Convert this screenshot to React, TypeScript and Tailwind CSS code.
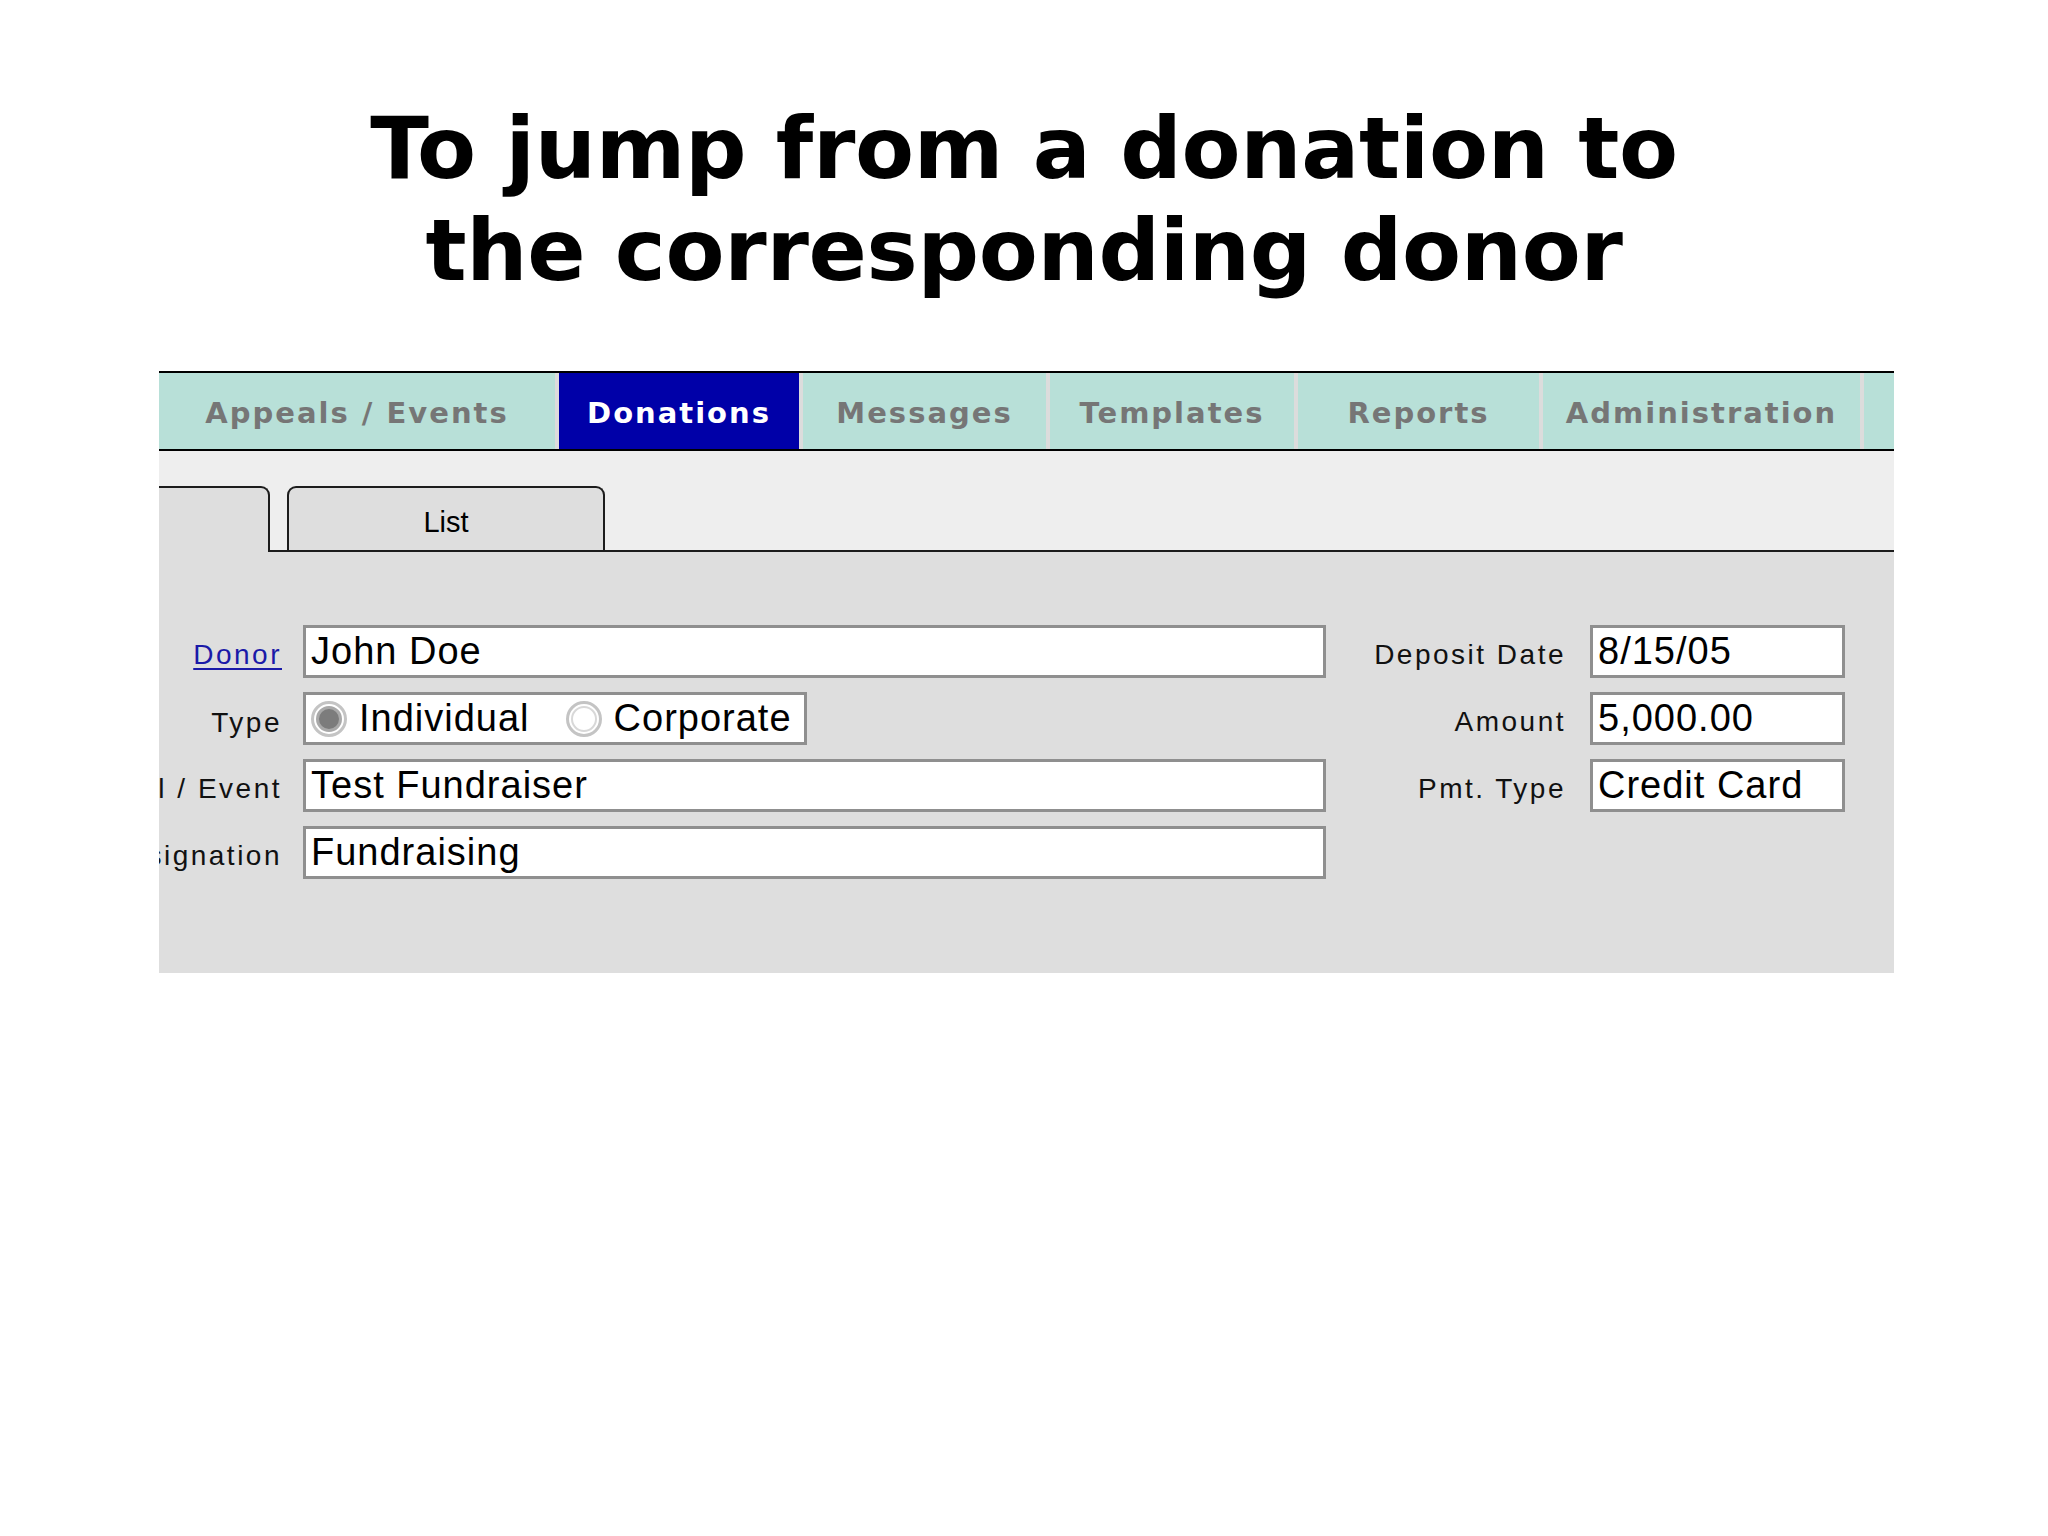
import React from 'react';

const tabs = [
  { label: 'Appeals / Events', width: 'w-[396px]' },
  { label: 'Donations', width: 'w-[240px]', active: true },
  { label: 'Messages', width: 'w-[243px]' },
  { label: 'Templates', width: 'w-[244px]' },
  { label: 'Reports', width: 'w-[241px]' },
  { label: 'Administration', width: 'w-[317px]' },
];

const labelCls =
  "flex justify-end whitespace-nowrap text-[28px] tracking-[2.5px] text-[#111] font-['Liberation_Sans',Arial,sans-serif]";
const fieldCls =
  "h-[53px] bg-white border-[3px] border-[#8f8f8f] pl-[5px] flex items-center text-[38px] tracking-[1px] text-black font-['Liberation_Sans',Arial,sans-serif] whitespace-nowrap overflow-hidden";

const Radio = ({ checked }: { checked?: boolean }) => (
  <span className="w-[36px] h-[36px] rounded-full border-[3px] border-[#c4c4c4] bg-white flex items-center justify-center shrink-0 self-center">
    <span
      className={
        checked
          ? 'w-[26px] h-[26px] rounded-full border-[3px] border-[#a9a9a9] bg-[#7c7c7c]'
          : 'w-[26px] h-[26px] rounded-full border-2 border-[#d8d8d8] bg-white'
      }
    />
  </span>
);

export default function App() {
  return (
    <div className="w-[2048px] h-[1536px] bg-white">
      <h1 className="pt-[97px] text-center text-[86px] leading-[102px] font-bold text-black tracking-[-0.3px] font-['DejaVu_Sans',Verdana,sans-serif]">
        To jump from a donation to
        <br />
        the corresponding donor
      </h1>

      <div className="mt-[70px] ml-[159px] w-[1735px] h-[602px] overflow-hidden bg-[#dedede] flex flex-col">
        {/* main navigation */}
        <div className="h-[80px] border-t-2 border-b-2 border-black bg-[#dcdcdc] flex gap-[4px] shrink-0">
          {tabs.map((t) => (
            <div
              key={t.label}
              className={`${t.width} shrink-0 flex items-center justify-center pt-[6px] text-[29px] tracking-[2px] font-bold font-['DejaVu_Sans',Verdana,sans-serif] ${
                t.active ? 'bg-[#0000a8] text-white' : 'bg-[#b8e0d8] text-[#767676]'
              }`}
            >
              {t.label}
            </div>
          ))}
          <div className="flex-1 bg-[#b8e0d8]" />
        </div>

        {/* sub tabs */}
        <div className="h-[101px] bg-[#eeeeee] flex items-end shrink-0">
          <div className="w-[111px] h-[66px] bg-[#dedede] border-t-2 border-r-2 border-[#1c1c1c] rounded-tr-[9px] shrink-0" />
          <div className="flex-1 h-[66px] flex items-end border-b-2 border-[#1c1c1c] pl-[17px]">
            <div className="w-[318px] h-[64px] bg-[#dedede] border-t-2 border-l-2 border-r-2 border-[#1c1c1c] rounded-t-[9px] flex items-center justify-center pt-[8px] text-[29px] text-black font-['Liberation_Sans',Arial,sans-serif]">
              List
            </div>
          </div>
        </div>

        {/* donation form */}
        <div className="flex-1 pt-[73px] flex">
          <div className="w-[1167px] flex flex-col gap-[14px] shrink-0">
            <div className="flex items-baseline gap-[21px]">
              <div className={`w-[123px] ${labelCls}`}>
                <a href="#" className="text-[#1a1aa8] underline underline-offset-4">Donor</a>
              </div>
              <div className={`w-[1023px] ${fieldCls}`}>John Doe</div>
            </div>
            <div className="flex items-baseline gap-[21px]">
              <div className={`w-[123px] ${labelCls}`}>
                <span>Type</span>
              </div>
              <div className={`w-[504px] ${fieldCls} pl-[2px]`}>
                <Radio checked />
                <span className="ml-[12px]">Individual</span>
                <span className="ml-[36px] flex items-center">
                  <Radio />
                </span>
                <span className="ml-[12px]">Corporate</span>
              </div>
            </div>
            <div className="flex items-baseline gap-[21px]">
              <div className={`w-[123px] ${labelCls}`}>
                <span className="shrink-0">Appeal / Event</span>
              </div>
              <div className={`w-[1023px] ${fieldCls}`}>Test Fundraiser</div>
            </div>
            <div className="flex items-baseline gap-[21px]">
              <div className={`w-[123px] ${labelCls}`}>
                <span className="shrink-0">Designation</span>
              </div>
              <div className={`w-[1023px] ${fieldCls}`}>Fundraising</div>
            </div>
          </div>

          <div className="ml-[20px] flex flex-col gap-[14px]">
            <div className="flex items-baseline gap-[24px]">
              <div className={`w-[220px] ${labelCls}`}>Deposit Date</div>
              <div className={`w-[255px] ${fieldCls}`}>8/15/05</div>
            </div>
            <div className="flex items-baseline gap-[24px]">
              <div className={`w-[220px] ${labelCls}`}>Amount</div>
              <div className={`w-[255px] ${fieldCls}`}>5,000.00</div>
            </div>
            <div className="flex items-baseline gap-[24px]">
              <div className={`w-[220px] ${labelCls}`}>Pmt. Type</div>
              <div className={`w-[255px] ${fieldCls}`}>Credit Card</div>
            </div>
          </div>
        </div>
      </div>
    </div>
  );
}
